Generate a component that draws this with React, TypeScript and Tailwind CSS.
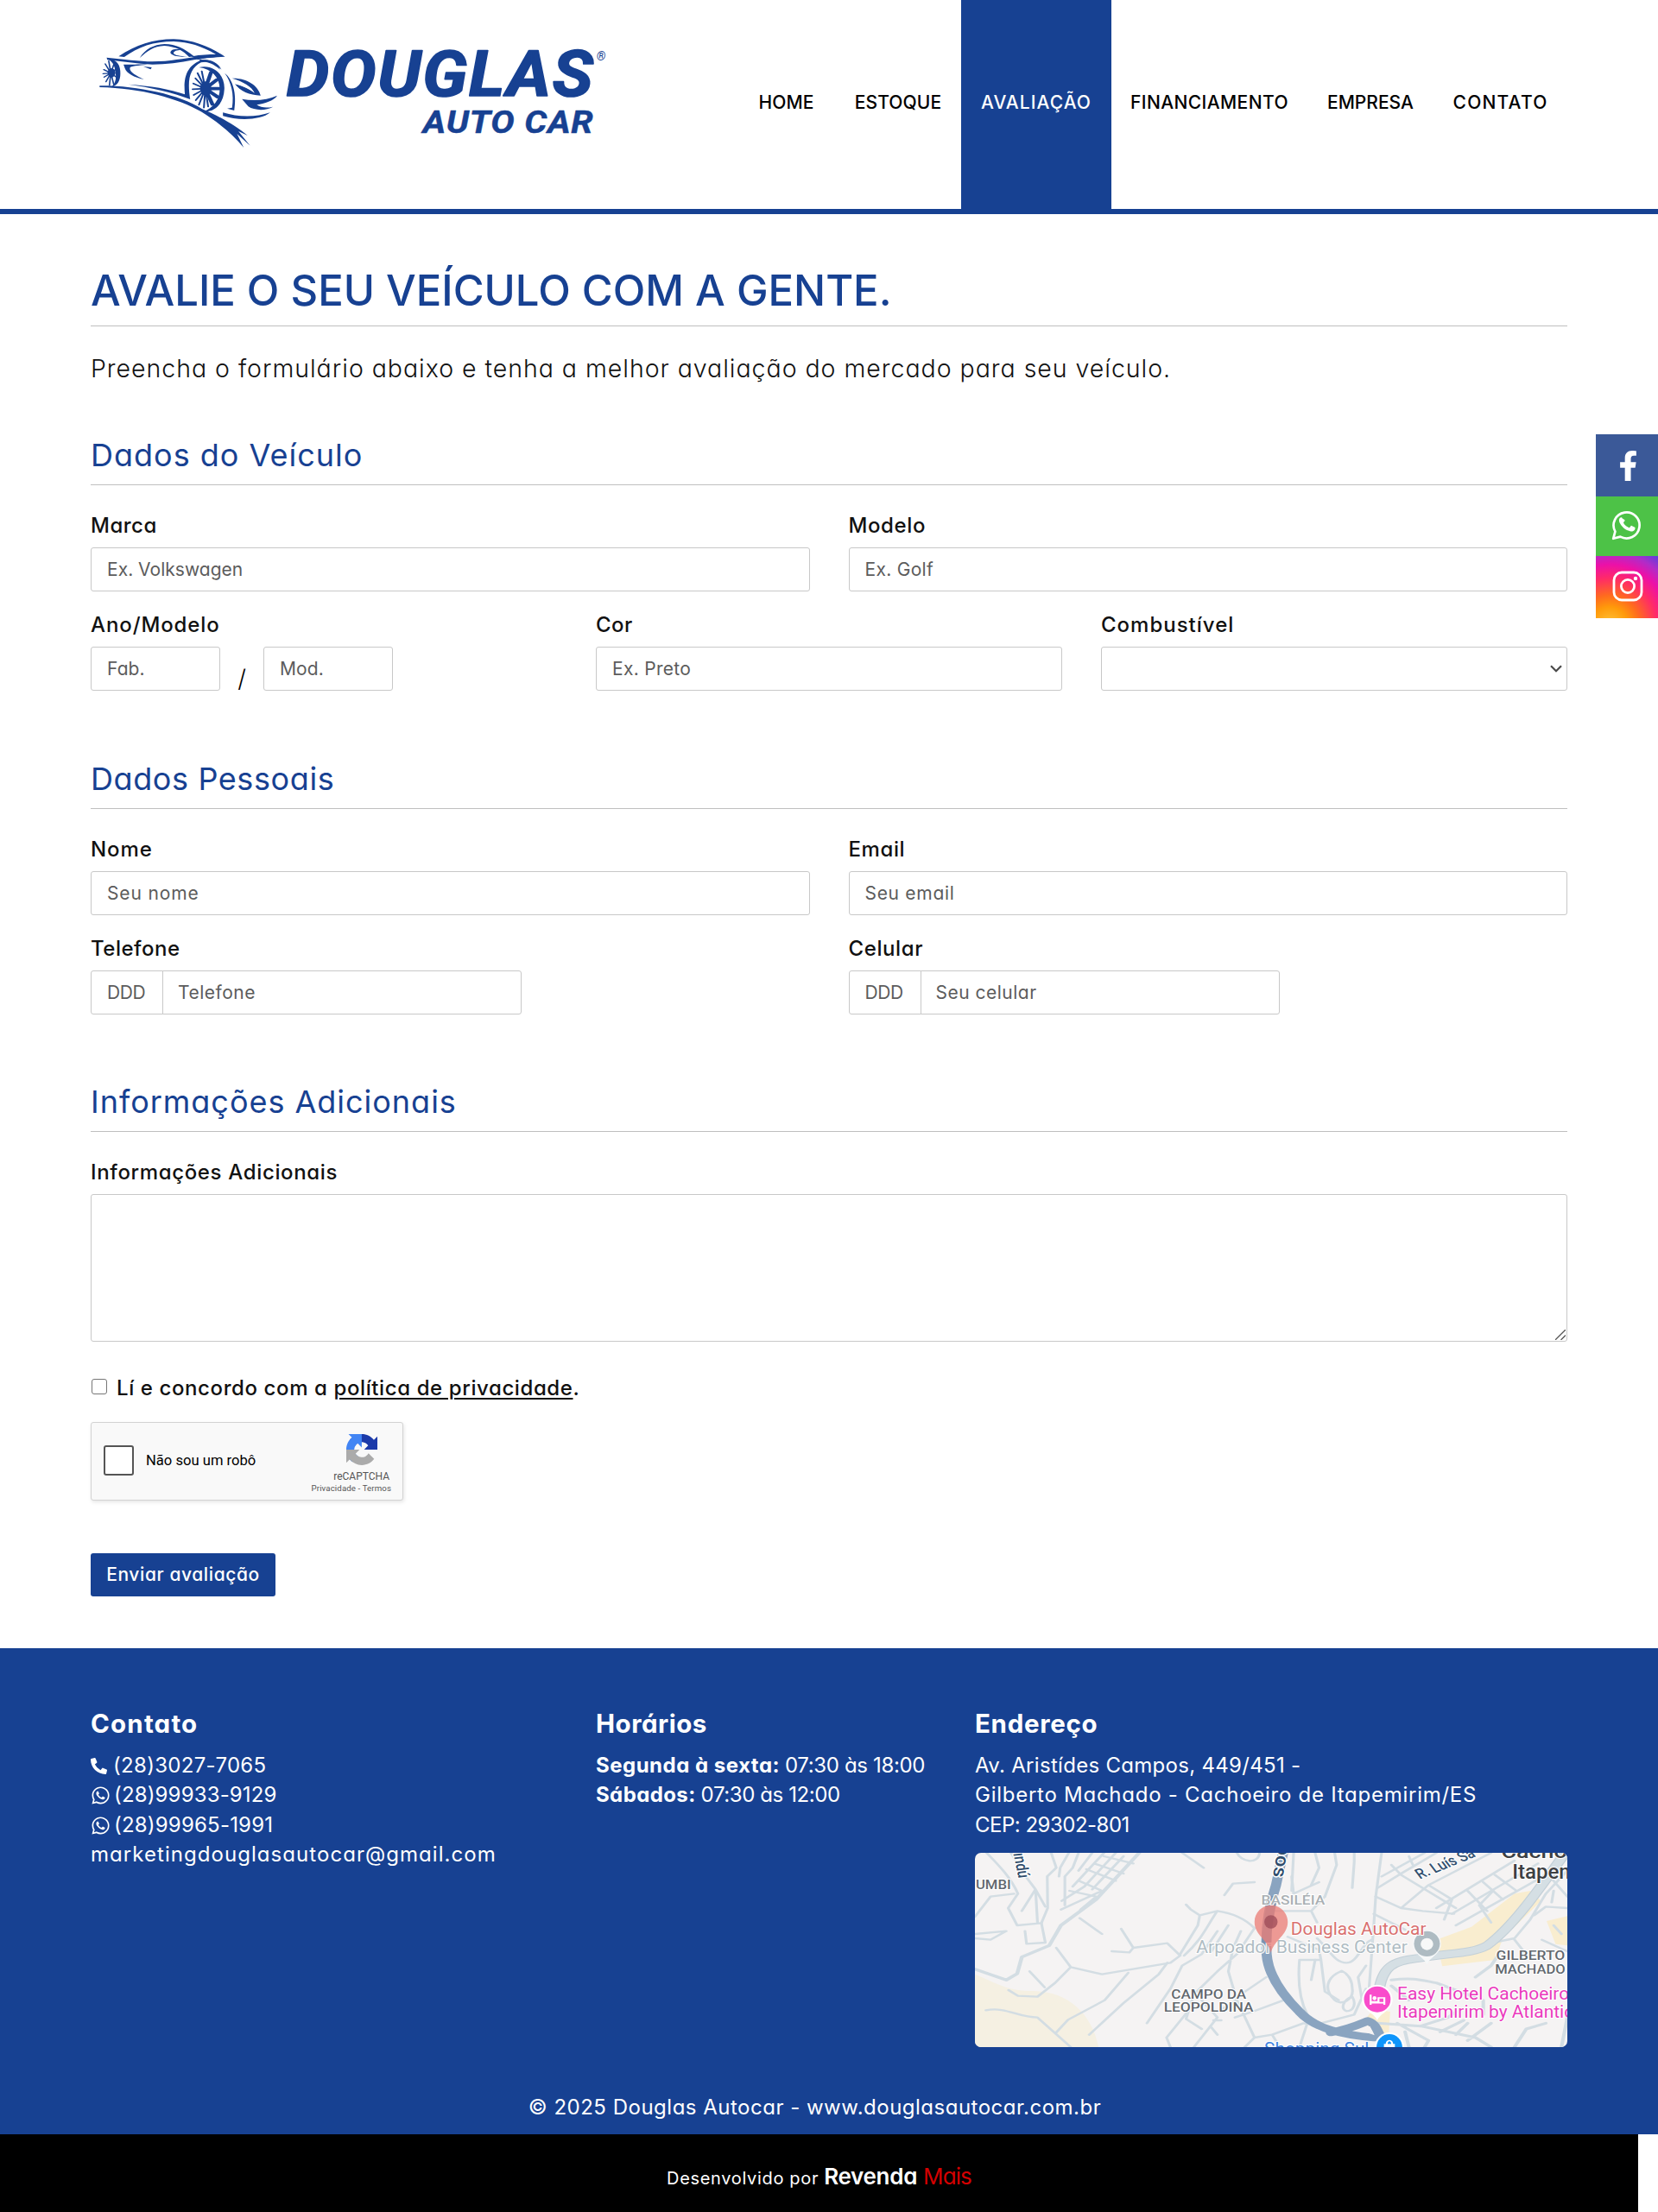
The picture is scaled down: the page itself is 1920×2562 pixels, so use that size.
import React from "react";
import { FaFacebookF, FaPhoneAlt, FaWhatsapp } from "react-icons/fa";

function CarLogo() {
  return (
    <svg className="block h-[170px] w-[640px]" viewBox="0 0 1568 510" preserveAspectRatio="none" fill="#174192" stroke="none">
      {/* roof and windows */}
      <path d="M116 136C165 96 215 76 272 76C330 78 378 105 418 137C390 137 370 138 342 147L322 136C350 130 372 129 392 129C352 100 315 86 272 84C215 84 172 103 132 138Z" />
      <path d="M176 141C192 110 215 95 246 93C280 94 302 108 330 136L316 138C300 116 278 102 246 99C215 100 198 118 176 141Z" />
      <path d="M312 136C294 138 270 138 263 124C263 112 276 108 300 114C284 113 272 116 272 125C276 133 290 134 312 136Z" />
      {/* hood line */}
      <path d="M82 140C130 146 175 153 212 154C262 154 300 143 345 136C372 131 398 134 416 137C380 140 356 142 330 148C290 158 250 164 212 164C168 162 125 153 84 148Z" />
      {/* side body */}
      <path d="M130 164C150 166 172 162 198 164C172 168 150 168 148 176C146 190 168 204 188 216C160 210 138 194 134 178Z" />
      <path d="M186 171L210 174L207 181Z" />
      <path d="M144 233C205 238 262 249 304 268C300 215 306 172 348 150C370 142 398 155 408 182C388 158 368 152 350 157C318 178 310 215 319 285C270 262 205 243 144 233Z" />
      <path d="M62 238C160 236 290 268 352 318C400 342 450 378 482 411L456 396L489 446L452 405L471 453C440 405 395 362 350 328C285 282 180 246 62 243Z" />
      {/* front wheel */}
      <path d="M88 147C110 144 122 166 121 196C121 222 112 238 96 242C108 228 110 210 107 192C106 172 100 156 88 147Z" />
      <g stroke="#174192" strokeWidth="4" strokeLinecap="round">
        <path d="M94 194L88 152M94 194L78 162M94 194L74 182M94 194L72 196M94 194L75 208M94 194L80 224M94 194L90 236M94 194L102 232M94 194L104 158M94 194L112 178M94 194L112 210" />
      </g>
      <ellipse cx="96" cy="193" rx="11" ry="16" />
      {/* rear wheel */}
      <path d="M344 174C386 162 418 200 416 250C414 298 392 330 356 328C386 314 403 286 403 248C402 208 380 180 344 174Z" />
      <g stroke="#174192" strokeWidth="5" strokeLinecap="round">
        <path d="M362 248L352 188M362 248L340 194M362 248L334 212M362 248L328 230M362 248L326 250M362 248L329 270M362 248L335 288M362 248L344 304M362 248L358 314M362 248L370 310" />
        <path strokeWidth="11" d="M362 248L378 192M362 248L394 218M362 248L402 248M362 248L396 276M362 248L382 302" />
      </g>
      <ellipse cx="363" cy="247" rx="16" ry="24" />
      {/* rear fender */}
      <path d="M346 147C378 146 398 160 404 182C386 162 370 154 346 153Z" />
      <path d="M417 194C440 215 452 265 444 324L424 317L438 314C444 268 436 225 417 194Z" />
      <path d="M438 212C478 210 512 236 519 272C488 272 460 256 446 232C466 240 486 250 502 264C494 240 470 224 438 212Z" />
      <path d="M450 234C470 240 490 252 504 266C484 266 462 254 450 234Z" />
      <path d="M466 284C500 292 538 288 566 272C556 290 530 300 508 304C520 314 535 316 554 311C534 326 500 324 484 310Z" />
      <path d="M412 331C456 348 506 348 546 331C520 358 456 360 412 343Z" />
      <g fontFamily="Roboto, sans-serif" fontWeight="700" fontStyle="italic" stroke="#174192" strokeLinejoin="round">
        <text x="592" y="273" fontSize="221" strokeWidth="5" letterSpacing="5" textLength="874" lengthAdjust="spacingAndGlyphs">DOUGLAS</text>
        <text x="979" y="403" fontSize="111" strokeWidth="1.5" letterSpacing="2" textLength="485" lengthAdjust="spacingAndGlyphs">AUTO CAR</text>
        <text x="1472" y="150" fontSize="46" strokeWidth="0" textLength="26" lengthAdjust="spacingAndGlyphs">®</text>
      </g>
    </svg>
  );
}

const nav = [
  { t: "HOME", c: "w-[113px] tracking-[0.1px]" },
  { t: "ESTOQUE", c: "w-[146px] tracking-[0.1px]" },
  { t: "AVALIAÇÃO", c: "w-[174px] tracking-[1.05px] bg-[#174192] text-white" },
  { t: "FINANCIAMENTO", c: "w-[227px] tracking-[0.4px]" },
  { t: "EMPRESA", c: "w-[146px]" },
  { t: "CONTATO", c: "w-[155px] tracking-[1.2px]" },
];

const box = "block h-[51px] rounded-[3px] border border-[#c8c8c8] bg-white px-[18px] text-[21px] text-black outline-none placeholder:text-[#5c5c5c] placeholder:opacity-100";
const h2 = "border-b border-[#bfbfbf] pb-2 text-[36px] leading-[52px] text-[#174192]";

function Label({ children, c = "tracking-[0.4px]" }: { children: React.ReactNode; c?: string }) {
  return <div className={"pt-px pb-[7px] text-[24px] leading-9 font-medium text-[#111] " + c}>{children}</div>;
}

function Field({ label, ph, lc, pc = "tracking-[0.3px]" }: { label: string; ph: string; lc?: string; pc?: string }) {
  return (
    <div>
      <Label c={lc}>{label}</Label>
      <input className={box + " w-full " + pc} placeholder={ph} />
    </div>
  );
}

function PhoneField({ label, ph, lc, pc }: { label: string; ph: string; lc?: string; pc: string }) {
  return (
    <div>
      <Label c={lc}>{label}</Label>
      <div className="flex">
        <input className={box + " w-[84px] rounded-r-none tracking-[-0.4px]"} placeholder="DDD" />
        <input className={box + " -ml-px w-[416px] rounded-l-none pl-[17px] " + pc} placeholder={ph} />
      </div>
    </div>
  );
}

function Recaptcha() {
  return (
    <div className="mt-[21px] flex h-[91px] w-[362px] rounded-[3px] border border-[#d3d3d3] bg-[#f9f9f9] pl-[14px] font-['Roboto'] shadow-[1px_2px_4px_rgba(0,0,0,0.1)]">
      <div className="mt-[26px] h-[35px] w-[35px] rounded-[3px] border-[2.5px] border-[#555] bg-white" />
      <div className="mt-[30px] ml-[14px] w-[190px] text-[16.6px] leading-7 text-black">Não sou um robô</div>
      <div className="flex w-[94px] flex-col items-end">
        <svg className="mt-[13px] mr-[16px] h-9 w-9" viewBox="0 0 64 64">
          <path fill="#1c3aa9" d="M64 31.955l-.033-1.37V4.687l-7.16 7.16C50.948 4.674 42.033.093 32.05.093c-10.4 0-19.622 4.96-25.458 12.64l11.736 11.86a15.55 15.55 0 0 1 4.754-5.334c2.05-1.6 4.952-2.906 8.968-2.906.485 0 .86.057 1.135.163 4.976.393 9.288 3.14 11.828 7.124l-8.307 8.307L64 31.953" />
          <path fill="#4285f4" d="M31.862.094l-1.37.033H4.594l7.16 7.16C4.58 13.147 0 22.06 0 32.046c0 10.4 4.96 19.622 12.64 25.458L24.5 45.768a15.55 15.55 0 0 1-5.334-4.754c-1.6-2.05-2.906-4.952-2.906-8.968 0-.485.057-.86.163-1.135.393-4.976 3.14-9.288 7.124-11.828l8.307 8.307L31.86.095" />
          <path fill="#ababab" d="M.001 32.045l.033 1.37v25.898l7.16-7.16c5.86 7.173 14.774 11.754 24.76 11.754 10.4 0 19.622-4.96 25.458-12.64l-11.736-11.86a15.55 15.55 0 0 1-4.754 5.334c-2.05 1.6-4.952 2.906-8.968 2.906-.485 0-.86-.057-1.135-.163-4.976-.393-9.288-3.14-11.828-7.124l8.307-8.307c-10.522.04-22.4.066-27.295-.005" />
        </svg>
        <div className="mt-[5px] mr-[2px] text-[12px] leading-4 whitespace-nowrap text-[#555]">reCAPTCHA</div>
        <div className="text-[9.7px] leading-3 tracking-[0.1px] whitespace-nowrap text-[#555]">Privacidade - Termos</div>
      </div>
    </div>
  );
}

function StreetMap() {
  return (
    <svg className="mt-[15px] block h-[225px] w-[686px] rounded-[7px]" viewBox="20 48 1515 675" preserveAspectRatio="none" fontFamily="Roboto, sans-serif">
      <rect x="20" y="48" width="1515" height="675" fill="#f5f3f3" />
      <path fill="#f5f0e2" d="M20 470C60 490 100 530 170 528C260 530 320 610 336 723H20Z" />
      <path fill="#f9edcf" d="M1200 350L1290 305L1400 190L1440 180L1468 215L1370 345L1350 420L1215 442Z" />
      <path fill="#f9edcf" d="M1482 285L1535 268V370L1505 365ZM1040 590L1082 600L1078 680L1010 640Z" />
      <g fill="none" stroke="#d3dde3" strokeWidth="7" strokeLinejoin="round" strokeLinecap="round">
        <path d="M50 48C80 90 110 130 130 190L105 240L128 300L190 292L200 360L152 364L148 320" />
        <path d="M112 48L150 130L175 175L180 290M20 345L60 350L100 320L20 330M20 270L60 200L120 190M175 175L140 250M175 175L200 235" />
        <path d="M215 48L228 100L205 130L206 240L190 292M260 48L238 100L235 130M285 48L270 100L250 130V230M320 48L285 110" />
        <path strokeWidth="10" d="M20 452L100 490L128 468L140 410L210 370L240 300L330 210L440 48" />
        <path d="M242 215L300 165L380 48M262 180L330 200M285 145L345 180M305 105L380 145M325 85L400 120M350 60L425 85M330 200L290 245M240 245L345 180M270 165L350 48M320 175L400 60" />
        <path d="M288 275L345 330M394 312L412 350L425 378M370 390L415 394L425 378L512 362L545 405L520 430L345 470L265 445L228 378M265 445L225 500L180 548L130 545L106 525M160 460L198 515" />
        <path d="M412 465L352 560L258 628L228 672M512 430L490 470L400 570L312 680M48 595C100 582 130 620 180 620L265 723M555 405C600 350 610 310 640 250C680 258 710 275 735 310M640 250L595 265L572 245L560 228M595 265L590 300L545 400" />
        <path d="M640 320L600 400L550 440L520 520L460 640M668 300L625 390M700 320L680 380L668 460L690 560L735 690M735 310L690 400L640 460L580 540L560 625L600 660M570 590L510 690L520 723M600 560L640 620L580 723M625 655L640 680M650 630L630 630" />
        <path d="M690 560L640 600M700 540L765 480M685 620L730 600L810 560M735 690L780 680L860 640L905 650M735 690L710 723M780 680L800 723M870 640L850 723M690 48C700 80 745 90 748 48M550 48L605 100M735 150L680 155L658 195M780 250L880 250L915 200M880 250L895 290M830 130L835 190L900 150" />
        <path d="M890 48L900 100L880 160M940 48L945 90L915 200M990 48V80L985 170M1060 48L1045 200L1040 300L1028 520M835 48L830 180M895 345C930 390 940 430 970 430C1000 430 1010 360 1035 350M820 340L900 385L905 420L850 420C845 500 850 560 870 610M905 420L915 530L950 560" />
        <path d="M958 458C920 480 910 520 940 560C955 580 990 560 985 520C985 490 975 470 958 458ZM890 420L880 490M985 548C960 560 955 590 970 598C990 598 995 570 985 548" />
        <path d="M1020 520L990 610L905 640M1020 440L1000 480L1010 560M1045 200L1110 240L1165 250L1245 260M1040 260L1120 315M1110 240L1180 160L1340 48M1050 170L1110 120L1200 48M1060 130L1170 48M1085 90L1110 125L1250 240M1180 160L1240 210L1220 280M1200 240L1400 75M1240 260L1460 85M1250 300L1480 125M1280 180L1330 250M1320 150L1370 210M1350 125L1405 180M1130 60L1140 90" />
        <path d="M1340 290L1310 230L1345 180M1450 265L1480 235L1535 240M1345 360L1400 345L1440 280L1480 190L1535 110M1470 350L1535 390M1400 350L1435 410M1490 130L1535 200M1495 220L1500 180M1500 300L1520 330" />
        <path strokeWidth="9" d="M1085 490C1140 480 1160 490 1200 500L1300 550M1085 510L1130 560M1300 480L1340 440L1360 400M1050 640L1160 650L1300 690L1340 723M1100 640L1180 700L1170 723M1160 650L1230 620L1250 600M1210 670L1270 630M1250 680L1280 640M1280 700L1340 640M1120 670L1130 723M1480 640L1430 660L1400 723M1535 620L1520 723M1320 560V610" />
      </g>
      <g fill="none" strokeLinecap="round" strokeLinejoin="round">
        <path stroke="#c3d0d8" strokeWidth="29" d="M1052 540C1060 440 1090 425 1150 415C1230 395 1290 400 1330 370C1400 300 1470 160 1530 48" />
        <path stroke="#d5dfe4" strokeWidth="23" d="M1052 540C1060 440 1090 425 1150 415C1230 395 1290 400 1330 370C1400 300 1470 160 1530 48" />
        <path stroke="#8aa4c0" strokeWidth="26" d="M808 48L790 160C770 240 763 330 766 400C770 470 805 540 850 600C890 660 960 680 1040 690M930 672C980 660 1010 640 1025 632C1045 640 1050 670 1062 700" />
        <path stroke="#6c89a9" strokeWidth="24" opacity=".6" d="M780 210L766 330V355" />
      </g>
      <path d="M1002 662L1030 650L1042 682Z" fill="#f5f3f3" />
      <g stroke="#fff" strokeWidth="6" paintOrder="stroke" strokeLinejoin="round">
        <text x="22" y="174" fontSize="44" fill="#62686e" fontWeight="500" textLength="90" lengthAdjust="spacingAndGlyphs">UMBI</text>
        <text transform="translate(118 50) rotate(81)" fontSize="42" fill="#2f4c6b" fontWeight="500" textLength="88" lengthAdjust="spacingAndGlyphs">ındú</text>
        <text transform="translate(796 16) rotate(97)" fontSize="48" fill="#2f4c6b" fontWeight="500" textLength="116" lengthAdjust="spacingAndGlyphs">pos</text>
        <text transform="translate(1158 140) rotate(-29)" fontSize="50" fill="#33506f" fontWeight="500" textLength="165" lengthAdjust="spacingAndGlyphs">R. Luís Sa</text>
        <text x="752" y="227" fontSize="45" fill="#a9afb3" textLength="163" lengthAdjust="spacingAndGlyphs" fontWeight="500">BASILÉIA</text>
        <text x="586" y="396" fontSize="60" fill="#afbcc3" textLength="540" lengthAdjust="spacingAndGlyphs">Arpoador Business Center</text>
        <text x="1366" y="66" fontSize="66" fill="#3d4043" textLength="200" lengthAdjust="spacingAndGlyphs" fontWeight="500">Cachoe</text>
        <text x="1394" y="137" fontSize="70" fill="#3d4043" textLength="166" lengthAdjust="spacingAndGlyphs" fontWeight="500">Itapem</text>
        <text x="1353" y="421" fontSize="44" fill="#62686e" textLength="176" lengthAdjust="spacingAndGlyphs" fontWeight="500">GILBERTO</text>
        <text x="1350" y="467" fontSize="44" fill="#62686e" textLength="180" lengthAdjust="spacingAndGlyphs" fontWeight="500">MACHADO</text>
        <text x="522" y="555" fontSize="44" fill="#62686e" textLength="192" lengthAdjust="spacingAndGlyphs" fontWeight="500">CAMPO DA</text>
        <text x="503" y="600" fontSize="44" fill="#62686e" textLength="229" lengthAdjust="spacingAndGlyphs" fontWeight="500">LEOPOLDINA</text>
        <text x="1100" y="558" fontSize="62" fill="#ea3bbd" textLength="440" lengthAdjust="spacingAndGlyphs">Easy Hotel Cachoeiro</text>
        <text x="1100" y="621" fontSize="62" fill="#ea3bbd" textLength="476" lengthAdjust="spacingAndGlyphs">Itapemirim by Atlantica</text>
        <text x="760" y="750" fontSize="60" fill="#3f83e0" textLength="268" lengthAdjust="spacingAndGlyphs">Shopping Sul</text>
      </g>
      {/* place markers */}
      <path d="M1176 436C1168 410 1140 400 1140 364C1140 336 1156 317 1176 317S1212 336 1212 364C1212 400 1184 410 1176 436Z" fill="#f6f8f9" />
      <ellipse cx="1176" cy="364" rx="33" ry="44" fill="#aebbc2" />
      <ellipse cx="1176" cy="365" rx="16" ry="21" fill="#f7f8f8" />
      <path d="M777 395C770 350 735 335 735 288C735 255 754 230 777 230S820 255 820 288C820 335 785 350 777 395Z" fill="#ea7f78" fillOpacity=".78" />
      <ellipse cx="777" cy="288" rx="17" ry="23" fill="#9b4a57" fillOpacity=".75" />
      <text x="828" y="334" fontSize="62" fill="#d9706f" stroke="#fff" strokeWidth="6" paintOrder="stroke" strokeLinejoin="round" textLength="346" lengthAdjust="spacingAndGlyphs">Douglas AutoCar</text>
      <path d="M1049 630C1040 602 1010 596 1010 558C1010 528 1028 507 1049 507S1088 528 1088 558C1088 596 1058 602 1049 630Z" fill="#fff" />
      <ellipse cx="1049" cy="557" rx="34" ry="45" fill="#f94ccb" />
      <path d="M1032 541V576M1032 569H1067V576M1067 566V552H1052V566H1032" fill="none" stroke="#fff" strokeWidth="5" />
      <ellipse cx="1042" cy="553" rx="5" ry="7" fill="#fff" />
      <ellipse cx="1080" cy="724" rx="38" ry="52" fill="#fff" />
      <ellipse cx="1080" cy="724" rx="33" ry="46" fill="#0f95fb" />
      <path d="M1066 712H1094V734H1066Z" fill="#fff" />
      <path d="M1073 714C1072 696 1088 696 1087 714" fill="none" stroke="#fff" strokeWidth="5" />
    </svg>
  );
}

function Social() {
  return (
    <div className="absolute top-[503px] right-0 w-[72px]">
      <div className="flex h-[72px] items-center justify-center bg-[#3b5998] pl-[2px] text-white"><FaFacebookF size={35} /></div>
      <div className="flex h-[69px] items-center justify-center bg-[#4dc247] pb-[4px] text-white">
        <svg width="36" height="36" viewBox="0 0 36 36" fill="none">
          <path d="M2.2 33.8L4.4 25.6A15 15 0 1 1 10.4 31.6Z" stroke="currentColor" strokeWidth="2.7" strokeLinejoin="round" />
          <path fill="currentColor" d="M12.6 9.6c-.5-1-.9-1-1.4-1-1.2 0-3 1.4-3 4.2 0 2.700 2 5.300 2.300 5.700.3.4 3.900 6.100 9.600 8.300 4.700 1.800 5.700 1.500 6.700 1.400 1-.1 3.300-1.300 3.700-2.700.5-1.300.5-2.400.3-2.700-.1-.2-.5-.4-1.100-.7l-3.700-1.800c-.5-.2-.9-.3-1.200.3l-1.700 2.100c-.3.4-.6.4-1.200.1-.6-.3-2.300-.9-4.400-2.700-1.600-1.500-2.700-3.300-3-3.800-.3-.6 0-.9.3-1.100.8-.9 1.400-1.700 1.500-2 .1-.4.1-.7-.1-1z" transform="translate(2.200 2.300) scale(.82)" />
        </svg>
      </div>
      <div className="flex h-[72px] items-center justify-center bg-[radial-gradient(circle_at_22%_112%,#ffc83d_0%,#ff9a0a_22%,#ff6a1f_36%,#ff2a68_56%,#ec10a8_72%,#b02cc8_86%,#5a3fdc_100%)] pb-[2px] pl-px text-white">
        <svg width="36" height="36" viewBox="0 0 36 36" fill="none" stroke="currentColor" strokeWidth="2.8">
          <rect x="2" y="2" width="32" height="32" rx="9" />
          <circle cx="18" cy="18" r="7.600" />
          <circle cx="27" cy="9" r="2.200" fill="currentColor" stroke="none" />
        </svg>
      </div>
    </div>
  );
}

export default function App() {
  return (
    <div className="relative w-[1920px] bg-white font-['Inter',sans-serif] [font-feature-settings:'cv11']">
      <header className="flex h-[248px] justify-between border-b-[6px] border-[#174192] pr-[105px] pl-[90px]">
        <div className="pt-5"><CarLogo /></div>
        <nav className="flex">
          {nav.map((n) => (
            <a key={n.t} className={"block h-[242px] text-center text-[21px] leading-[237px] font-medium " + n.c}>{n.t}</a>
          ))}
        </nav>
      </header>
      <Social />

      <main className="px-[105px] pt-[59px]">
        <h1 className="border-b border-[#bfbfbf] pb-[10px] text-[49px] leading-[60px] font-medium text-[#174192]">AVALIE O SEU VEÍCULO COM A GENTE.</h1>
        <p className="mt-7 text-[28.5px] leading-[42px] font-light tracking-[0.97px] text-[#111]">Preencha o formulário abaixo e tenha a melhor avaliação do mercado para seu veículo.</p>

        <h2 className={h2 + " mt-[53px] tracking-[1px]"}>Dados do Veículo</h2>
        <div className="mt-7 grid grid-cols-2 gap-x-[45px]">
          <Field label="Marca" ph="Ex. Volkswagen" lc="tracking-[0.5px]" pc="tracking-[0.02px]" />
          <Field label="Modelo" ph="Ex. Golf" lc="tracking-[0.6px]" />
        </div>
        <div className="mt-5 grid grid-cols-3 gap-x-[45px]">
          <div>
            <Label c="tracking-[0.9px]">Ano/Modelo</Label>
            <div className="flex h-[51px]">
              <input className={box + " w-[150px] tracking-[0.1px]"} placeholder="Fab." />
              <div className="w-[50px] pt-3 text-center text-[28px] leading-[50px] font-light">/</div>
              <input className={box + " w-[150px] tracking-[0.1px]"} placeholder="Mod." />
            </div>
          </div>
          <Field label="Cor" ph="Ex. Preto" />
          <div>
            <Label c="tracking-[1px]">Combustível</Label>
            <div className="relative">
              <select className={box + " w-full appearance-none"} />
              <svg className="absolute top-[21px] right-[6px] h-[9px] w-[14px]" viewBox="0 0 14 9" fill="none" stroke="#4a4a4a" strokeWidth="2.2"><path d="M1 1.300L7 7.300L13 1.300" /></svg>
            </div>
          </div>
        </div>

        <h2 className={h2 + " mt-[76px] tracking-[0.6px]"}>Dados Pessoais</h2>
        <div className="mt-7 grid grid-cols-2 gap-x-[45px]">
          <Field label="Nome" ph="Seu nome" lc="tracking-[0.9px]" pc="tracking-[0.85px]" />
          <Field label="Email" ph="Seu email" lc="tracking-[0.6px]" pc="tracking-[0.7px]" />
        </div>
        <div className="mt-5 grid grid-cols-2 gap-x-[45px]">
          <PhoneField label="Telefone" ph="Telefone" lc="tracking-[0.5px]" pc="tracking-[0.5px]" />
          <PhoneField label="Celular" ph="Seu celular" lc="tracking-[0.6px]" pc="tracking-[0.5px]" />
        </div>

        <h2 className={h2 + " mt-[75px] tracking-[0.98px]"}>Informações Adicionais</h2>
        <div className="mt-7">
          <Label c="tracking-[0.65px]">Informações Adicionais</Label>
          <div className="relative">
            <textarea className="block h-[171px] w-full resize-none rounded-[3px] border border-[#c8c8c8] outline-none" />
            <svg className="absolute right-[2px] bottom-[2px] h-3 w-3" viewBox="0 0 12 12" stroke="#555" strokeWidth="1.300"><path d="M0 12L12 0M6.500 12L12 6.500" /></svg>
          </div>
        </div>
        <label className="mt-9 flex h-9 items-start text-[24px] leading-9 font-medium tracking-[0.6px] text-[#111]">
          <span className="mt-[7px] mr-[11px] ml-px block h-[18px] w-[18px] rounded-[3px] border-[1.5px] border-[#767676] bg-white" />
          <span>Lí e concordo com a <a className="underline decoration-2 underline-offset-3">política de privacidade</a>.</span>
        </label>
        <Recaptcha />
        <button className="mt-[61px] block h-[50px] w-[214px] rounded-[3px] bg-[#174192] text-[21px] font-medium tracking-[0.6px] whitespace-nowrap text-white">Enviar avaliação</button>
      </main>

      <footer className="mt-[60px] h-[563px] bg-[#174192] px-[105px] pt-[65px] text-[24px] leading-[34.4px] text-white">
        <div className="flex">
          <div className="w-[585px]">
            <h3 className="mb-[10px] text-[29.5px] leading-[44px] font-bold tracking-[1.2px]">Contato</h3>
            <div className="flex items-center tracking-[0.3px]"><FaPhoneAlt size={19} className="mr-[7px]" />(28)3027-7065</div>
            <div className="flex items-center tracking-[0.15px]"><FaWhatsapp size={23} className="mr-[4px]" />(28)99933-9129</div>
            <div className="flex items-center tracking-[0.2px]"><FaWhatsapp size={23} className="mr-[4px]" />(28)99965-1991</div>
            <div className="tracking-[1.05px]">marketingdouglasautocar@gmail.com</div>
          </div>
          <div className="w-[439px]">
            <h3 className="mb-[10px] text-[29.5px] leading-[44px] font-bold tracking-[0.5px]">Horários</h3>
            <div className="flex gap-[6px] tracking-[-0.35px]"><b className="font-bold tracking-[0.5px]">Segunda à sexta:</b>07:30 às 18:00</div>
            <div className="flex gap-[6px] tracking-[-0.4px]"><b className="font-bold tracking-[0.4px]">Sábados:</b>07:30 às 12:00</div>
          </div>
          <div className="w-[686px]">
            <h3 className="mb-[10px] text-[29.5px] leading-[44px] font-bold tracking-[0.7px]">Endereço</h3>
            <div className="tracking-[0.3px]">Av. Aristídes Campos, 449/451 -</div>
            <div className="tracking-[0.74px]">Gilberto Machado - Cachoeiro de Itapemirim/ES</div>
            <div className="tracking-[-0.5px]">CEP: 29302-801</div>
            <StreetMap />
          </div>
        </div>
        <div className="mt-[53px] pr-[33px] text-center tracking-[0.5px]">© 2025 Douglas Autocar - www.douglasautocar.com.br</div>
      </footer>
      <div className="flex h-[90px] w-[1897px] items-baseline justify-center bg-black pt-[32px] text-[20px] leading-[34px] tracking-[0.67px] text-white">
        Desenvolvido por
        <b className="ml-[6px] text-[26px] font-semibold tracking-[-0.3px]">Revenda</b>
        <span className="ml-[7px] text-[26px] tracking-[-0.9px] text-[#d40000]">Mais</span>
      </div>
    </div>
  );
}
